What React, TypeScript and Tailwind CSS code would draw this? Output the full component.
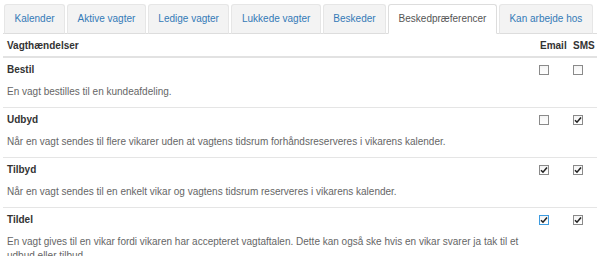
import { useState } from 'react';

type Pref = {
  title: string;
  text: string;
  email: boolean;
  sms: boolean;
  focused?: boolean;
};

const tabs = [
  'Kalender',
  'Aktive vagter',
  'Ledige vagter',
  'Lukkede vagter',
  'Beskeder',
  'Beskedpræferencer',
  'Kan arbejde hos',
];

const initialPrefs: Pref[] = [
  { title: 'Bestil', text: 'En vagt bestilles til en kundeafdeling.', email: false, sms: false },
  {
    title: 'Udbyd',
    text: 'Når en vagt sendes til flere vikarer uden at vagtens tidsrum forhåndsreserveres i vikarens kalender.',
    email: false,
    sms: true,
  },
  {
    title: 'Tilbyd',
    text: 'Når en vagt sendes til en enkelt vikar og vagtens tidsrum reserveres i vikarens kalender.',
    email: true,
    sms: true,
  },
  {
    title: 'Tildel',
    text: 'En vagt gives til en vikar fordi vikaren har accepteret vagtaftalen. Dette kan også ske hvis en vikar svarer ja tak til et udbud eller tilbud.',
    email: true,
    sms: true,
    focused: true,
  },
];

function Box({ checked, focused, onClick }: { checked: boolean; focused?: boolean; onClick: () => void }) {
  return (
    <span
      onClick={onClick}
      className={`flex h-[10px] w-[10px] cursor-pointer items-center justify-center border bg-gradient-to-b from-[#f4f4f4] to-white ${
        focused ? 'border-[#3d9be0]' : 'border-[#8a8a8a]'
      }`}
    >
      {checked && (
        <svg width="8" height="8" viewBox="0 0 8 8">
          <path d="M1 4.2 L3 6.2 L7 1.6" fill="none" stroke="#222" strokeWidth="1.6" />
        </svg>
      )}
    </span>
  );
}

export default function App() {
  const [active, setActive] = useState(5);
  const [prefs, setPrefs] = useState(initialPrefs);

  const toggle = (i: number, key: 'email' | 'sms') => {
    setPrefs(p => p.map((row, j) => (j === i ? { ...row, [key]: !row[key] } : row)));
  };

  return (
    <div className="h-[256px] w-[602px] overflow-hidden bg-white pl-[3px] pr-[5px] pt-[4px] font-['Liberation_Sans',Arial,sans-serif] text-[10px] leading-[14px] text-[#333]">
      {/* tabs */}
      <ul className="flex border-b border-[#ddd] pl-[1px]">
        {tabs.map((t, i) => (
          <li
            key={t}
            onClick={() => setActive(i)}
            className={`-mb-px mr-[2px] cursor-pointer rounded-t-[3px] border px-[9.5px] py-[7px] ${
              i === active
                ? 'border-[#ddd] border-b-white bg-white text-[#555]'
                : 'border-[#e6e6e6] border-b-[#ddd] bg-[#f3f3f3] text-[#337ab7]'
            }`}
          >
            {t}
          </li>
        ))}
      </ul>

      {/* table */}
      <div className="flex border-b-2 border-[#e2e2e2] pb-[3px] pt-[5px] font-bold">
        <div className="flex-1 pl-[4px]">Vagthændelser</div>
        <div className="w-[33px]">Email</div>
        <div className="w-[24px]">SMS</div>
      </div>

      {prefs.map((p, i) => (
        <div key={p.title} className="border-b border-[#e5e5e5] pb-[8px] pt-[5px]">
          <div className="flex">
            <div className="flex-1 pl-[4px] font-bold">{p.title}</div>
            <div className="w-[33px] pt-[2px]">
              <div className="-ml-px">
                <Box checked={p.email} focused={p.focused} onClick={() => toggle(i, 'email')} />
              </div>
            </div>
            <div className="w-[24px] pt-[2px]">
              <Box checked={p.sms} onClick={() => toggle(i, 'sms')} />
            </div>
          </div>
          <p className="mt-[8px] max-w-[522px] pl-[4px] text-[#666]">{p.text}</p>
        </div>
      ))}
    </div>
  );
}
